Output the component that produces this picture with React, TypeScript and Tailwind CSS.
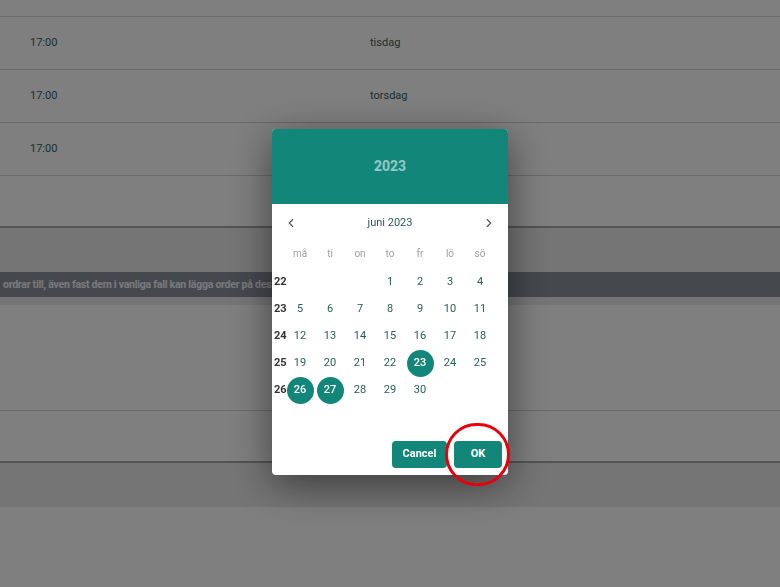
import { ChevronLeft, ChevronRight } from "lucide-react";

const rows = [
  { time: "17:00", day: "tisdag" },
  { time: "17:00", day: "torsdag" },
  { time: "17:00", day: "lördag" },
];

const weekdays = ["må", "ti", "on", "to", "fr", "lö", "sö"];

// june 2023 starts on a thursday
const weeks: { nr: number; days: (number | null)[] }[] = [
  { nr: 22, days: [null, null, null, 1, 2, 3, 4] },
  { nr: 23, days: [5, 6, 7, 8, 9, 10, 11] },
  { nr: 24, days: [12, 13, 14, 15, 16, 17, 18] },
  { nr: 25, days: [19, 20, 21, 22, 23, 24, 25] },
  { nr: 26, days: [26, 27, 28, 29, 30, null, null] },
];

const selected = [23, 26, 27];

const Page = () => {
  return (
    <div className="bg-white min-h-[587px] text-[11px] text-[#33645d]">
      <div className="h-[17px] border-b border-[#d4d4d4]"></div>
      {rows.map((r, i) => (
        <div key={i} className="h-[53px] border-b border-[#d4d4d4] flex items-center">
          <div className="w-[370px] pl-[30px]">{r.time}</div>
          <div>{r.day}</div>
        </div>
      ))}
      <div className="h-[52px] border-b-2 border-[#a8a8a8]"></div>
      <div className="bg-[#ebebeb] h-[77px] pt-[44px]">
        <div className="h-[25px] bg-[#8a929c] flex items-center pl-[3px] overflow-hidden">
          <span className="whitespace-nowrap font-bold text-[10.5px] tracking-[-0.25px] text-white/90">
            ordrar till, även fast dem i vanliga fall kan lägga order på dessa dagar
          </span>
        </div>
      </div>
      <div className="h-[106px] border-b border-[#d4d4d4]"></div>
      <div className="h-[52px] border-b-2 border-[#a8a8a8] flex items-center">
        <div className="w-[370px]"></div>
        <div className="text-[12px] text-[#3a5a56]">Levereras enligt resultat</div>
      </div>
      <div className="h-[44px] bg-[#ebebeb]"></div>
    </div>
  );
};

const DatePicker = () => {
  return (
    <div className="relative w-[236px] bg-white rounded-[4px] shadow-[0_10px_40px_rgba(0,0,0,0.5)]">
      <div className="h-[75px] bg-[#128679] rounded-t-[4px] flex items-center justify-center">
        <span className="text-[14px] font-bold text-white/55">2023</span>
      </div>
      <div className="pt-[4px]">
        <div className="h-[30px] flex items-center justify-between px-[12px]">
          <ChevronLeft size={14} strokeWidth={2} className="text-[#555]" />
          <span className="text-[11px] text-[#285e57]">juni 2023</span>
          <ChevronRight size={14} strokeWidth={2} className="text-[#555]" />
        </div>
        <div className="mt-[5px] h-[20px] flex items-center pl-[13px]">
          {weekdays.map((w) => (
            <div key={w} className="w-[30px] text-center text-[10px] text-[#a0a0a0]">
              {w}
            </div>
          ))}
        </div>
        <div className="mt-[6px]">
          {weeks.map((wk) => (
            <div key={wk.nr} className="h-[27px] flex items-center">
              <div className="w-[13px] pl-[2px] text-[11px] font-bold text-[#333]">{wk.nr}</div>
              {wk.days.map((d, i) => (
                <div key={i} className="w-[30px] flex justify-center">
                  {d !== null &&
                    (selected.includes(d) ? (
                      <div className="w-[27px] h-[27px] rounded-full bg-[#128679] text-white font-medium text-[11px] flex items-center justify-center">
                        {d}
                      </div>
                    ) : (
                      <div className="w-[27px] h-[27px] text-[11px] text-[#285e57] flex items-center justify-center">
                        {d}
                      </div>
                    ))}
                </div>
              ))}
            </div>
          ))}
        </div>
        <div className="mt-[37px] pb-[7px] pr-[6px] flex justify-end gap-[7px]">
          <button className="h-[27px] w-[55px] rounded-[4px] bg-[#128679] text-white font-bold text-[11px]">
            Cancel
          </button>
          <button className="relative h-[27px] w-[48px] rounded-[4px] bg-[#128679] text-white font-bold text-[11px]">
            OK
            <span className="absolute left-[-9px] top-[-18px] w-[65px] h-[63px] rounded-full border-[3px] border-[#e8000b]"></span>
          </button>
        </div>
      </div>
    </div>
  );
};

export default function App() {
  return (
    <div className="relative h-[587px] overflow-hidden" style={{ fontFamily: "Roboto, 'Noto Sans', sans-serif" }}>
      <Page />
      <div className="fixed inset-0 bg-black/50 flex justify-center items-start pt-[129px]">
        <DatePicker />
      </div>
    </div>
  );
}
